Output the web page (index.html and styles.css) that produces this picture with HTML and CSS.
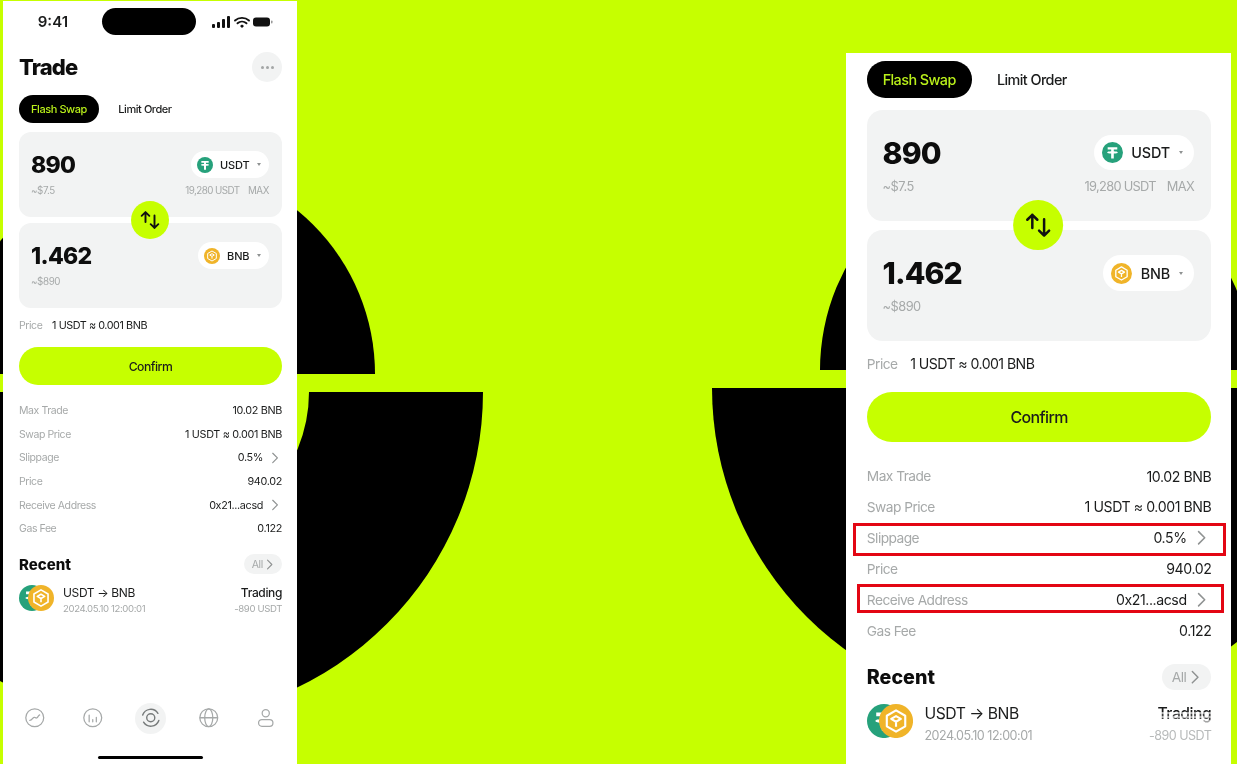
FILE: index.html
```html
<!DOCTYPE html>
<html lang="en">
<head>
<meta charset="UTF-8">
<meta name="viewport" content="width=device-width, initial-scale=1.0">
<title>Trade - Flash Swap</title>
<link rel="stylesheet" href="styles.css">
</head>
<body>

<svg width="0" height="0" class="icon-defs">
    <symbol id="coin-usdt" viewBox="0 0 24 24">
        <circle cx="12" cy="12" r="12" fill="#26a17b"/>
        <path d="M6.500 6h11v2.600h-4v2c2.400.1 4.600.6 4.600 1.300s-2.200 1.200-4.600 1.300V19h-3v-5.800C8.100 13.100 5.900 12.600 5.900 11.900s2.200-1.200 4.600-1.300v-2h-4z" fill="#fff"/>
    </symbol>
    <symbol id="coin-bnb" viewBox="0 0 24 24">
        <circle cx="12" cy="12" r="12" fill="#f0b429"/>
        <path d="M12 4.500l6.500 3.750v7.500L12 19.500l-6.500-3.750v-7.500z" fill="none" stroke="#fff" stroke-width="1.500" stroke-linejoin="round"/>
        <path d="M12 8.500l3.400 2-3.400 2-3.400-2zM12 12.500v3.500" fill="none" stroke="#fff" stroke-width="1.500" stroke-linejoin="round"/>
    </symbol>
    <symbol id="swap-arrows" viewBox="0 0 24 24">
        <path d="M6.600 14.500V2.500M2 7l4.600-4.500L11.200 7M17.400 6.500v15M12.800 17l4.600 4.500L22 17" fill="none" stroke="#111" stroke-width="2.300" stroke-linecap="round" stroke-linejoin="round"/>
    </symbol>
    <symbol id="chevron" viewBox="0 0 10 14">
        <path d="M2.500 1.500L8 7l-5.500 5.500" fill="none" stroke="currentColor" stroke-width="1.400" stroke-linecap="round" stroke-linejoin="round"/>
    </symbol>
    <symbol id="tab-market" viewBox="0 0 24 24">
        <circle cx="12" cy="12" r="10" fill="none" stroke="#a6a9a9" stroke-width="1.400"/>
        <path d="M6.500 15c1.500 0 2.300-1 3.200-2.200s1.700-1.800 2.800-1 2 .6 2.800-.6 1.300-2 2.200-2.400" fill="none" stroke="#a6a9a9" stroke-width="1.400" stroke-linecap="round"/>
    </symbol>
    <symbol id="tab-chart" viewBox="0 0 24 24">
        <circle cx="12" cy="12" r="10" fill="none" stroke="#a6a9a9" stroke-width="1.400"/>
        <path d="M8 9v7.500M12 14v2.500M16 11.500v5" fill="none" stroke="#a6a9a9" stroke-width="1.400" stroke-linecap="round"/>
    </symbol>
    <symbol id="tab-swap" viewBox="0 0 24 24">
        <circle cx="12" cy="12" r="4.500" fill="none" stroke="#777b7b" stroke-width="1.600"/>
        <path d="M3 9A9.500 9.500 0 0 1 20 7" fill="none" stroke="#777b7b" stroke-width="1.600" stroke-linecap="round"/>
        <path d="M21 15A9.500 9.500 0 0 1 4 17" fill="none" stroke="#777b7b" stroke-width="1.600" stroke-linecap="round"/>
    </symbol>
    <symbol id="tab-globe" viewBox="0 0 24 24">
        <circle cx="12" cy="12" r="10" fill="none" stroke="#a6a9a9" stroke-width="1.400"/>
        <ellipse cx="12" cy="12" rx="4.500" ry="10" fill="none" stroke="#a6a9a9" stroke-width="1.400"/>
        <path d="M2 12h20" fill="none" stroke="#a6a9a9" stroke-width="1.400"/>
    </symbol>
    <symbol id="tab-user" viewBox="0 0 24 24">
        <circle cx="12" cy="7" r="4" fill="none" stroke="#a6a9a9" stroke-width="1.400"/>
        <rect x="4" y="14" width="16" height="7.500" rx="3.700" fill="none" stroke="#a6a9a9" stroke-width="1.400"/>
    </symbol>
</svg>

<div class="stage">

    <!-- 背景の黒い半円 -->
    <svg class="backdrop" width="1237" height="764" viewBox="0 0 1237 764">
        <path d="M-47 374A211 211 0 0 1 375 374Z" fill="#000"/>
        <path d="M309 392H483A328 328 0 0 1 -173 392H11A149 149 0 0 0 309 392Z" fill="#000"/>
        <path d="M820 370A216 216 0 0 1 1252 370Z" fill="#000"/>
        <path d="M712 388H1360A324 324 0 0 1 712 388Z" fill="#000"/>
    </svg>

    <!-- 左: アプリ画面 -->
    <section class="phone">
        <div class="status-bar">
            <span class="status-time">9:41</span>
            <span class="status-island"></span>
            <svg class="status-icons" viewBox="0 0 62 14">
                <rect x="0" y="9" width="3" height="4" rx="1" fill="#111"/>
                <rect x="5" y="7" width="3" height="6" rx="1" fill="#111"/>
                <rect x="10" y="4" width="3" height="9" rx="1" fill="#111"/>
                <rect x="15" y="1" width="3" height="12" rx="1" fill="#111"/>
                <path d="M23 5.500a10.500 10.500 0 0 1 14 0M25.500 8.300a6.800 6.800 0 0 1 9 0" fill="none" stroke="#111" stroke-width="1.900" stroke-linecap="round"/>
                <path d="M28 11l2-1.500 2 1.500-2 2z" fill="#111"/>
                <rect x="41" y="2.500" width="17" height="9" rx="3" fill="#111"/>
                <rect x="59" y="5.500" width="1.500" height="3" rx=".7" fill="#999"/>
            </svg>
        </div>

        <header class="page-head">
            <h1>Trade</h1>
            <button class="more-btn"><i></i><i></i><i></i></button>
        </header>

        <nav class="tabs">
            <span class="tab tab-active"><b>Flash Swap</b></span>
            <span class="tab"><b>Limit Order</b></span>
        </nav>

        <div class="cards">
            <div class="card">
                <div class="card-top">
                    <span class="amount">890</span>
                    <span class="coin-pill">
                        <svg class="coin"><use href="#coin-usdt"/></svg>
                        <span class="coin-name">USDT</span>
                        <i class="caret"></i>
                    </span>
                </div>
                <div class="card-sub">
                    <span>~$7.5</span>
                    <span class="balance">19,280 USDT<em>MAX</em></span>
                </div>
            </div>
            <div class="card">
                <div class="card-top">
                    <span class="amount">1.462</span>
                    <span class="coin-pill">
                        <svg class="coin"><use href="#coin-bnb"/></svg>
                        <span class="coin-name">BNB</span>
                        <i class="caret"></i>
                    </span>
                </div>
                <div class="card-sub">
                    <span>~$890</span>
                </div>
            </div>
            <button class="swap-btn"><svg><use href="#swap-arrows"/></svg></button>
        </div>

        <p class="price-line"><span>Price</span><b>1 USDT ≈ 0.001 BNB</b></p>
        <button class="confirm-btn"><b>Confirm</b></button>

        <ul class="details">
            <li><span>Max Trade</span><b>10.02 BNB</b></li>
            <li><span>Swap Price</span><b>1 USDT ≈ 0.001 BNB</b></li>
            <li><span>Slippage</span><b class="has-link">0.5%<svg class="chevron"><use href="#chevron"/></svg></b></li>
            <li><span>Price</span><b>940.02</b></li>
            <li><span>Receive Address</span><b class="has-link">0x21...acsd<svg class="chevron"><use href="#chevron"/></svg></b></li>
            <li><span>Gas Fee</span><b>0.122</b></li>
        </ul>

        <div class="recent-head">
            <h2>Recent</h2>
            <span class="all-btn"><b>All</b><svg class="chevron"><use href="#chevron"/></svg></span>
        </div>
        <div class="recent-item">
            <span class="pair"><svg><use href="#coin-usdt"/></svg><svg><use href="#coin-bnb"/></svg></span>
            <span class="recent-text"><b>USDT → BNB</b><small>2024.05.10 12:00:01</small></span>
            <span class="recent-text recent-right"><b>Trading</b><small>-890 USDT</small></span>
        </div>

        <nav class="tabbar">
            <span class="tabbar-item"><svg><use href="#tab-market"/></svg></span>
            <span class="tabbar-item"><svg><use href="#tab-chart"/></svg></span>
            <span class="tabbar-item tabbar-active"><svg><use href="#tab-swap"/></svg></span>
            <span class="tabbar-item"><svg><use href="#tab-globe"/></svg></span>
            <span class="tabbar-item"><svg><use href="#tab-user"/></svg></span>
        </nav>
        <div class="home-bar"></div>
    </section>

    <!-- 右: 拡大した画面 -->
    <section class="phone phone-large">
        <nav class="tabs">
            <span class="tab tab-active"><b>Flash Swap</b></span>
            <span class="tab"><b>Limit Order</b></span>
        </nav>

        <div class="cards">
            <div class="card">
                <div class="card-top">
                    <span class="amount">890</span>
                    <span class="coin-pill">
                        <svg class="coin"><use href="#coin-usdt"/></svg>
                        <span class="coin-name">USDT</span>
                        <i class="caret"></i>
                    </span>
                </div>
                <div class="card-sub">
                    <span>~$7.5</span>
                    <span class="balance">19,280 USDT<em>MAX</em></span>
                </div>
            </div>
            <div class="card">
                <div class="card-top">
                    <span class="amount">1.462</span>
                    <span class="coin-pill">
                        <svg class="coin"><use href="#coin-bnb"/></svg>
                        <span class="coin-name">BNB</span>
                        <i class="caret"></i>
                    </span>
                </div>
                <div class="card-sub">
                    <span>~$890</span>
                </div>
            </div>
            <button class="swap-btn"><svg><use href="#swap-arrows"/></svg></button>
        </div>

        <p class="price-line"><span>Price</span><b>1 USDT ≈ 0.001 BNB</b></p>
        <button class="confirm-btn"><b>Confirm</b></button>

        <ul class="details">
            <li><span>Max Trade</span><b>10.02 BNB</b></li>
            <li><span>Swap Price</span><b>1 USDT ≈ 0.001 BNB</b></li>
            <li class="marked marked-wide"><span>Slippage</span><b class="has-link">0.5%<svg class="chevron"><use href="#chevron"/></svg></b></li>
            <li><span>Price</span><b>940.02</b></li>
            <li class="marked marked-narrow"><span>Receive Address</span><b class="has-link">0x21...acsd<svg class="chevron"><use href="#chevron"/></svg></b></li>
            <li><span>Gas Fee</span><b>0.122</b></li>
        </ul>

        <div class="recent-head">
            <h2>Recent</h2>
            <span class="all-btn"><b>All</b><svg class="chevron"><use href="#chevron"/></svg></span>
        </div>
        <div class="recent-item">
            <span class="pair"><svg><use href="#coin-usdt"/></svg><svg><use href="#coin-bnb"/></svg></span>
            <span class="recent-text"><b>USDT → BNB</b><small>2024.05.10 12:00:01</small></span>
            <span class="recent-text recent-right recent-smudged"><b>Trading</b><small>-890 USDT</small></span>
        </div>
    </section>

</div>

</body>
</html>
```

FILE: styles.css
```css
/* 全体 */
body {
    margin: 0;
    font-family: Inter, "Liberation Sans", sans-serif;
    color: #1b1c1c;
}

.icon-defs {
    display: none;
}

.stage {
    position: relative;
    display: flex;
    justify-content: space-between;
    align-items: flex-start;
    height: 764px;
    padding: 0 6px 0 3px;
    box-sizing: border-box;
    overflow: hidden;
    background-color: #c6ff00;
}

.backdrop {
    position: absolute;
    top: 0;
    left: 0;
}

/* 画面: サイズはすべて em で、右は同じものの拡大 */
.phone {
    position: relative;
    display: flex;
    flex-direction: column;
    width: 29.4em;
    height: 763px;
    margin-top: 1px;
    padding: 0 1.5em 0 1.6em;
    box-sizing: border-box;
    background-color: #fff;
    font-size: 10px;
    filter: blur(.35px); /* 元画像が少しぼやけている */
}

.phone * {
    letter-spacing: -.04em;
}

.phone-large {
    height: 711px;
    margin-top: 53px;
    padding-top: .62em;
    font-size: 13.1px;
}

/* ステータスバー */
.status-bar {
    display: grid;
    grid-template-columns: 1fr 94px 1fr;
    align-items: center;
    margin: 7px -14px 0 -17px;
}
.status-time {
    justify-self: end;
    padding-right: 34px;
    font-size: 15px;
    font-weight: 600;
    letter-spacing: 0;
}
.status-island {
    height: 27px;
    border-radius: 14px;
    background-color: #000;
}
.status-icons {
    width: 62px;
    height: 14px;
    margin-left: 16px;
}

/* タイトル */
.page-head {
    display: flex;
    justify-content: space-between;
    align-items: center;
    margin-top: 1.7em;
    height: 3em;
}
.page-head h1 {
    margin: 0;
    font-size: 2.2em;
    font-weight: 800;
    color: #0d0d0d;
}
.more-btn {
    display: flex;
    justify-content: center;
    align-items: center;
    gap: 2px;
    width: 3em;
    height: 3em;
    padding: 0;
    border: 0;
    border-radius: 50%;
    background-color: #f2f3f3;
    font-size: inherit;
}
.more-btn i {
    width: 3px;
    height: 3px;
    border-radius: 50%;
    background-color: #a3a6a6;
}

/* タブ */
.tabs {
    display: flex;
    align-items: center;
    margin-top: 1.3em;
    margin-bottom: .9em;
}
.phone-large .tabs {
    margin-top: 0;
}
.tab {
    display: flex;
    align-items: center;
    justify-content: center;
    height: 2.8em;
    width: 8em;
    margin-right: .6em;
    border-radius: 1.4em;
}
.tab b {
    font-size: 1.1em;
    font-weight: 500;
}
.tab-active {
    background-color: #000;
    color: #b9f01a;
}

/* 入力カード */
.cards {
    position: relative;
    display: flex;
    flex-direction: column;
    gap: .6em;
}
.phone-large .cards {
    gap: .7em;
}
.card {
    height: 8.5em;
    padding: 1.93em 1.3em 0 1.2em;
    box-sizing: border-box;
    border-radius: 1.2em;
    background-color: #f2f3f3;
}
.card-top {
    display: flex;
    justify-content: space-between;
    align-items: center;
    height: 2.7em;
}
.amount {
    font-size: 2.3em;
    font-weight: 800;
    letter-spacing: -.03em;
    color: #0d0d0d;
}
.coin-pill {
    display: flex;
    align-items: center;
    height: 2.7em;
    padding: 0 .85em 0 .6em;
    border-radius: 1.35em;
    background-color: #fff;
}
.coin {
    width: 1.6em;
    height: 1.6em;
}
.coin-name {
    margin-left: .6em;
    font-size: 1.1em;
    font-weight: 500;
    letter-spacing: -.01em;
}
.caret {
    margin-left: .7em;
    border-top: .3em solid #8f9292;
    border-left: .22em solid transparent;
    border-right: .22em solid transparent;
}
.card-sub {
    display: flex;
    justify-content: space-between;
    margin-top: .57em;
    line-height: 1.4em;
    color: #a6a9a9;
}
.card-sub span {
    font-size: .98em;
}
.card-sub .balance {
    letter-spacing: -.055em;
}
.card-sub em {
    margin-left: .85em;
    font-style: normal;
}
.swap-btn {
    position: absolute;
    top: 50%;
    left: 50%;
    display: flex;
    justify-content: center;
    align-items: center;
    width: 3.8em;
    height: 3.8em;
    margin-left: -.05em;
    padding: 0;
    border: 0;
    border-radius: 50%;
    background-color: #c6ff00;
    transform: translate(-50%, -50%);
    font-size: inherit;
}
.swap-btn svg {
    width: 2em;
    height: 2em;
}

/* 価格と確認ボタン */
.price-line {
    display: flex;
    align-items: center;
    height: 2em;
    margin: .7em 0 1.2em;
}
.price-line span {
    width: 3.15em;
    font-size: 1.05em;
    color: #a6a9a9;
}
.price-line b {
    font-size: 1.08em;
    font-weight: 400;
}
.confirm-btn {
    display: block;
    width: 100%;
    height: 3.8em;
    padding: 0;
    border: 0;
    border-radius: 1.9em;
    background-color: #c6ff00;
    color: #1b1c1c;
    font-family: inherit;
    font-size: inherit;
}
.confirm-btn b {
    font-size: 1.22em;
    font-weight: 500;
}

/* 明細 */
.details {
    margin: 1.4em 0 0;
    padding: 0;
    list-style: none;
}
.details li {
    position: relative;
    display: flex;
    justify-content: space-between;
    align-items: center;
    height: 2.36em;
}
.details span {
    font-size: 1.05em;
    color: #a6a9a9;
}
.details b {
    display: flex;
    align-items: center;
    font-size: 1.08em;
    font-weight: 400;
    letter-spacing: -.03em;
}
.chevron {
    width: .9em;
    height: 1.1em;
    color: #8f9292;
}
.has-link .chevron {
    margin: 0 .25em 0 .6em;
}

/* 赤枠 */
.marked::after {
    content: "";
    position: absolute;
    border: 3px solid #e30613;
}
.marked-wide::after {
    top: 1px;
    bottom: -3px;
    left: -14px;
    right: -15px;
}
.marked-narrow::after {
    top: 0;
    bottom: 2px;
    left: -10px;
    right: -13px;
}

/* 履歴 */
.recent-head {
    display: flex;
    justify-content: space-between;
    align-items: center;
    margin-top: 1.38em;
    height: 2em;
}
.recent-head h2 {
    margin: 0;
    font-size: 1.5em;
    font-weight: 800;
    letter-spacing: 0;
    color: #0d0d0d;
}
.all-btn {
    display: flex;
    align-items: center;
    justify-content: center;
    gap: .25em;
    width: 3.8em;
    height: 2em;
    border-radius: 1em;
    background-color: #f2f3f3;
    color: #a6a9a9;
}
.all-btn b {
    font-size: 1.05em;
    font-weight: 400;
}
.recent-item {
    display: flex;
    margin-top: 1.05em;
}
.pair {
    display: flex;
    width: 4.4em;
}
.pair svg {
    width: 2.6em;
    height: 2.6em;
}
.pair svg + svg {
    margin-left: -1.7em;
}
.recent-text {
    display: flex;
    flex-direction: column;
    gap: .35em;
}
.recent-text b {
    font-size: 1.2em;
    font-weight: 400;
    letter-spacing: -.03em;
}
.recent-text small {
    font-size: .96em;
    color: #a6a9a9;
}
.recent-right {
    position: relative;
    margin-left: auto;
    align-items: flex-end;
}
.recent-right b {
    font-weight: 500;
}

/* 右下の文字は元画像で白くかすれている */
.recent-smudged::after {
    content: "";
    position: absolute;
    top: .6em;
    bottom: 1.1em;
    left: 0;
    right: 0;
    background: repeating-linear-gradient(180deg, rgba(255,255,255,.6) 0, rgba(255,255,255,.6) 2px, rgba(255,255,255,.15) 2px, rgba(255,255,255,.15) 4px);
}
.recent-smudged small {
    opacity: .8;
}

/* 下部タブ */
.tabbar {
    display: flex;
    justify-content: space-between;
    margin-top: auto;
    padding: 0 .05em;
}
.tabbar-item {
    display: flex;
    justify-content: center;
    align-items: center;
    width: 3.1em;
    height: 3.1em;
    border-radius: 50%;
}
.tabbar-item svg {
    width: 2.15em;
    height: 2.15em;
}
.tabbar-active {
    background-color: #f2f3f3;
}
.home-bar {
    width: 10.5em;
    height: 3.5px;
    margin: 22px auto 5px;
    border-radius: 2px;
    background-color: #000;
}
```
